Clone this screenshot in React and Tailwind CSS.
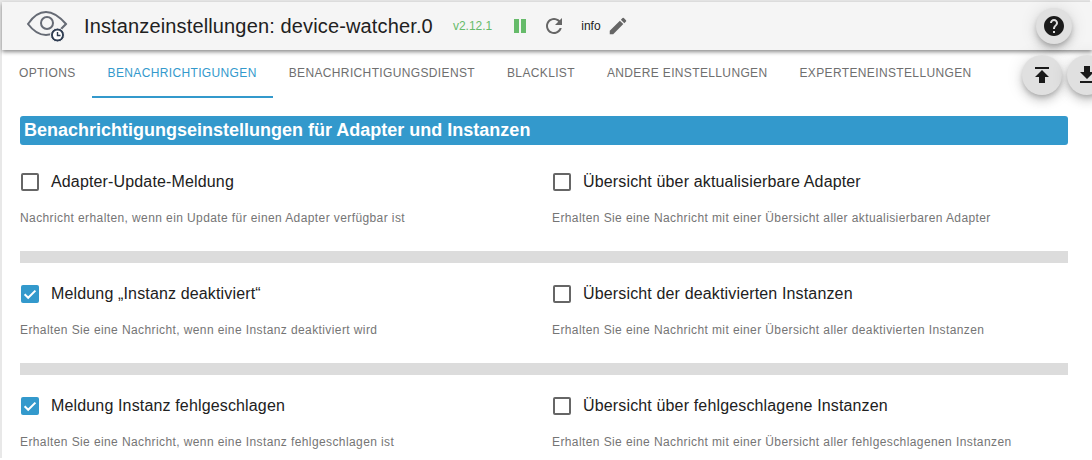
import { useState } from "react";

const TABS = [
  "Options",
  "Benachrichtigungen",
  "Benachrichtigungsdienst",
  "Blacklist",
  "Andere Einstellungen",
  "Experteneinstellungen",
];

const SECTIONS = [
  {
    left: { label: "Adapter-Update-Meldung", help: "Nachricht erhalten, wenn ein Update für einen Adapter verfügbar ist", checked: false },
    right: { label: "Übersicht über aktualisierbare Adapter", help: "Erhalten Sie eine Nachricht mit einer Übersicht aller aktualisierbaren Adapter", checked: false },
  },
  {
    left: { label: "Meldung „Instanz deaktiviert“", help: "Erhalten Sie eine Nachricht, wenn eine Instanz deaktiviert wird", checked: true },
    right: { label: "Übersicht der deaktivierten Instanzen", help: "Erhalten Sie eine Nachricht mit einer Übersicht aller deaktivierten Instanzen", checked: false },
  },
  {
    left: { label: "Meldung Instanz fehlgeschlagen", help: "Erhalten Sie eine Nachricht, wenn eine Instanz fehlgeschlagen ist", checked: true },
    right: { label: "Übersicht über fehlgeschlagene Instanzen", help: "Erhalten Sie eine Nachricht mit einer Übersicht aller fehlgeschlagenen Instanzen", checked: false },
  },
];

function EyeClock() {
  return (
    <svg width="42" height="32" viewBox="0 0 42 32" fill="none">
      <path d="M2 13 C8 4 14 1 20 1 C27 1 33 5 40 13 C34 20 27 24 20 24 C14 24 8 21 2 13 Z" stroke="#666b75" strokeWidth="2" />
      <circle cx="21" cy="12" r="6" stroke="#666b75" strokeWidth="2" />
      <circle cx="31.5" cy="24" r="7" fill="#2f3d52" stroke="#f5f5f5" strokeWidth="1" />
      <circle cx="31.5" cy="24" r="4.6" fill="#fff" />
      <path d="M31.5 21 V24.5 H34.5" stroke="#2f3d52" strokeWidth="1.4" />
    </svg>
  );
}

function RoundButton({ path, size }) {
  return (
    <button className={`flex items-center justify-center shrink-0 rounded-full bg-[#e0e0e0] shadow-[0_3px_5px_-1px_rgba(0,0,0,0.2),0_6px_10px_0_rgba(0,0,0,0.14),0_1px_18px_0_rgba(0,0,0,0.12)] ${size}`}>
      <svg width="24" height="24" viewBox="0 0 24 24" fill="#1a1a1a">
        <path d={path} />
      </svg>
    </button>
  );
}

function Field({ label, help, checked }) {
  const [on, setOn] = useState(checked);
  return (
    <div>
      <label className="flex items-center h-6 gap-[11px] cursor-pointer">
        <button onClick={() => setOn(!on)} className="w-5 h-5 shrink-0 block">
          {on ? (
            <svg width="20" height="20" viewBox="0 0 20 20">
              <rect x="1" y="1" width="18" height="18" rx="2" fill="#3399cc" />
              <path d="M4.6 10.3 L8.2 13.8 L15.4 6.6" stroke="#fff" strokeWidth="2" fill="none" />
            </svg>
          ) : (
            <svg width="20" height="20" viewBox="0 0 20 20">
              <rect x="2" y="2" width="16" height="16" rx="1" fill="none" stroke="#666" strokeWidth="2" />
            </svg>
          )}
        </button>
        <span className="text-base tracking-[0.15px] text-[#212121]">{label}</span>
      </label>
      <p className="mt-[17px] text-xs leading-[14px] tracking-[0.4px] text-[#757575]">{help}</p>
    </div>
  );
}

export default function App() {
  return (
    <div className="h-[460px] overflow-hidden bg-white pl-[2px] pt-[2px] font-['Liberation_Sans',sans-serif]">
      <div className="h-full bg-white shadow-[-2px_-2px_0_0_#e8e8e8]">
        <header className="relative z-10 flex items-center h-12 bg-[#f5f5f5] shadow-[0_2px_4px_rgba(0,0,0,0.45)]">
          <div className="ml-[24px] mt-[2px]">
            <EyeClock />
          </div>
          <h1 className="ml-[16px] -mt-[1px] text-xl tracking-[0.14px] text-[#212121]">Instanzeinstellungen: device-watcher.0</h1>
          <span className="ml-5 text-xs text-[#66bb6a]">v2.12.1</span>
          <svg className="ml-[16px]" width="24" height="24" viewBox="0 0 24 24" fill="#66bb6a">
            <path d="M6 5h5v14H6zM13 5h5v14h-5z" />
          </svg>
          <svg className="ml-[10px]" width="24" height="24" viewBox="0 0 24 24" fill="#666">
            <path d="M17.65 6.35C16.2 4.9 14.21 4 12 4c-4.42 0-7.99 3.58-7.99 8s3.57 8 7.99 8c3.73 0 6.84-2.55 7.73-6h-2.08c-.82 2.33-3.04 4-5.65 4-3.31 0-6-2.69-6-6s2.69-6 6-6c1.66 0 3.14.69 4.22 1.78L13 11h7V4l-2.35 2.35z" />
          </svg>
          <span className="ml-[15px] text-xs text-[#212121]">info</span>
          <svg className="ml-[6px]" width="22" height="22" viewBox="0 0 24 24" fill="#666">
            <path d="M3 17.25V21h3.75L17.81 9.94l-3.75-3.75L3 17.25zM20.71 7.04a1 1 0 0 0 0-1.41l-2.34-2.34a1 1 0 0 0-1.41 0l-1.83 1.83 3.75 3.75 1.83-1.83z" />
          </svg>
          <div className="ml-auto mr-[20px]">
            <RoundButton size="w-9 h-9" path="M12 2C6.48 2 2 6.48 2 12s4.48 10 10 10 10-4.48 10-10S17.52 2 12 2zm1 17h-2v-2h2v2zm2.07-7.75l-.9.92C13.45 12.9 13 13.5 13 15h-2v-.5c0-1.1.45-2.1 1.17-2.83l1.24-1.26c.37-.36.59-.86.59-1.41 0-1.1-.9-2-2-2s-2 .9-2 2H8c0-2.21 1.79-4 4-4s4 1.79 4 4c0 .88-.36 1.68-.93 2.25z" />
          </div>
        </header>

        <nav className="flex items-start h-12 pl-[1px] relative">
          <div className="flex h-12">
            {TABS.map((tab, i) => (
              <div
                key={tab}
                className={`flex items-center h-12 px-4 text-xs uppercase tracking-[0.36px] border-b-2 ${i === 1 ? "text-[#3399cc] border-[#3399cc]" : "text-[#6f6f6f] border-transparent"}`}
              >
                {tab}
              </div>
            ))}
          </div>
          <div className="absolute left-[1020px] top-[5px] flex gap-[5px] w-[90px] z-20">
            <RoundButton size="w-10 h-10" path="M5 4v2h14V4H5zm0 10h4v6h6v-6h4l-7-7-7 7z" />
            <RoundButton size="w-10 h-10" path="M19 9h-4V3H9v6H5l7 7 7-7zM5 18v2h14v-2H5z" />
          </div>
        </nav>

        <main className="pl-[18px] pr-[24px] pt-[18px]">
          <h2 className="h-[29px] pl-1 rounded-[3px] bg-[#3399cc] text-white text-lg font-bold leading-[29px]">
            Benachrichtigungseinstellungen für Adapter und Instanzen
          </h2>
          <div className="pt-[6px]">
            {SECTIONS.map((section, i) => (
              <div key={i}>
                <div className="grid grid-cols-[532px_1fr] pt-[19px]">
                  <Field {...section.left} />
                  <Field {...section.right} />
                </div>
                <div className="h-3 mt-[26px] bg-[#dcdcdc]" />
              </div>
            ))}
          </div>
        </main>
      </div>
    </div>
  );
}
